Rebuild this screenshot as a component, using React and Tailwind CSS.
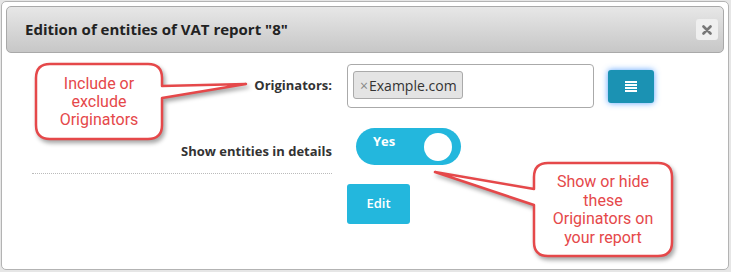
import React from 'react'

const ui = { fontFamily: '"Open Sans", "Noto Sans", sans-serif' }
const callout = { fontFamily: 'Roboto, "Liberation Sans", sans-serif' }

function Callouts() {
  return (
    <>
      <svg className="absolute inset-0 pointer-events-none" width="731" height="272" style={{ filter: 'drop-shadow(2px 3px 2px rgba(0,0,0,0.35))' }}>
        <path
          d="M 50 64 H 148 Q 162 64 162 78 V 86 L 246 84 L 162 98 V 125 Q 162 139 148 139 H 50 Q 36 139 36 125 V 78 Q 36 64 50 64 Z"
          fill="#fff"
          stroke="#e5484a"
          strokeWidth="2.5"
          strokeLinejoin="round"
        />
        <path
          d="M 548 163 H 658 Q 672 163 672 177 V 242 Q 672 256 658 256 H 548 Q 534 256 534 242 V 205 L 435 172 L 534 189 V 177 Q 534 163 548 163 Z"
          fill="#fff"
          stroke="#e5484a"
          strokeWidth="2.5"
          strokeLinejoin="round"
        />
      </svg>
      <div style={callout} className="absolute left-[36px] top-[75px] w-[126px] text-center text-[16px] leading-[18px] text-[#e5484a]">
        Include or<br />exclude<br />Originators
      </div>
      <div style={callout} className="absolute left-[534px] top-[173px] w-[138px] text-center text-[16px] leading-[18.5px] text-[#e5484a]">
        Show or hide<br />these<br />Originators on<br />your report
      </div>
    </>
  )
}

export default function App() {
  return (
    <div style={ui} className="relative w-[731px] h-[272px] bg-[#e6e6e6] pt-[1px] pl-[1px] overflow-hidden">
      <div className="w-[728px] h-[269px] border border-[#b3b3b3] rounded-[5px] bg-white p-[4px]">
        {/* Header */}
        <div className="h-[47px] rounded-[5px] border border-[#a9a9a9] bg-gradient-to-b from-[#e7e7e7] to-[#c7c7c7] flex items-center justify-between pl-[18px] pr-[5px]">
          <h1 className="text-[15px] font-bold text-[#222]">Edition of entities of VAT report "8"</h1>
          <button className="w-[22px] h-[21px] rounded-[3px] bg-[#efefef] flex items-center justify-center">
            <svg width="10" height="10" viewBox="0 0 10 10">
              <path d="M1.5 1.5 L8.5 8.5 M8.5 1.5 L1.5 8.5" stroke="#777" strokeWidth="2.6" strokeLinecap="round" />
            </svg>
          </button>
        </div>

        {/* Form */}
        <div className="pt-[11px]">
          <div className="flex items-center">
            <label className="w-[326px] text-right text-[13px] font-bold text-[#333]">Originators:</label>
            <div className="ml-[15px] w-[247px] h-[44px] border border-[#aaa] rounded-[4px] pl-[5px] pt-[6px]">
              <span className="inline-flex items-center h-[28px] pl-[6px] pr-[5px] border border-[#aaa] rounded-[3px] bg-[#e4e4e4] text-[14px] text-[#333]">
                <span className="text-[#888] mr-[1px]">×</span>Example.com
              </span>
            </div>
            <button className="ml-[14px] w-[46px] h-[33px] rounded-[3px] bg-[#1b92b3] shadow-[0_0_6px_rgba(50,140,255,0.8)] flex items-center justify-center">
              <svg width="12" height="11" viewBox="0 0 12 11">
                <rect x="0" y="0" width="12" height="2" fill="#fff" />
                <rect x="0" y="3" width="12" height="2" fill="#fff" />
                <rect x="0" y="6" width="12" height="2" fill="#fff" />
                <rect x="0" y="9" width="12" height="2" fill="#fff" />
              </svg>
            </button>
          </div>

          <div className="flex items-start mt-[20px]">
            <label className="w-[326px] text-right text-[13px] font-bold text-[#333] pt-[13px] leading-[20px]">Show entities in details</label>
            <div className="ml-[24px] w-[105px] h-[37px] rounded-full bg-[#23b7dd] flex items-center justify-between pl-[17px] pr-[9px]">
              <span className="text-white text-[13px] font-bold -mt-[10px]">Yes</span>
              <span className="w-[28px] h-[28px] rounded-full bg-white" />
            </div>
          </div>

          <div className="mt-[8px] ml-[26px] w-[300px] border-t border-dotted border-[#bbb]" />

          <button className="mt-[10px] ml-[341px] w-[63px] h-[40px] rounded-[3px] bg-[#23b7dd] text-white text-[13px] font-semibold">
            Edit
          </button>
        </div>
      </div>
      <Callouts />
    </div>
  )
}
